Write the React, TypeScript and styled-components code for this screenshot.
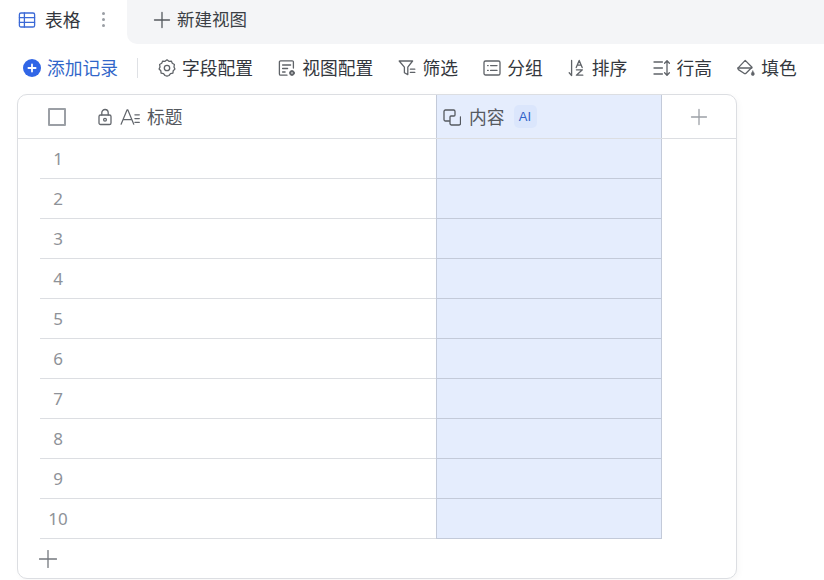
import React from "react";
import styled, { createGlobalStyle } from "styled-components";

const GlobalStyle = createGlobalStyle`
  html, body {
    margin: 0;
    padding: 0;
    background: #fff;
    width: 824px;
    height: 580px;
    overflow: hidden;
    font-family: "Noto Sans CJK SC", "Noto Sans", sans-serif;
  }
  * { box-sizing: border-box; }
  svg { flex-shrink: 0; }
`;

const GRAY = "#5f6368";

const Icon = ({ children, color = GRAY, size = 18 }: { children: React.ReactNode; color?: string; size?: number }) => (
  <svg width={size} height={size} viewBox="0 0 18 18" fill="none" stroke={color} strokeWidth="1.3" strokeLinecap="round" strokeLinejoin="round">
    {children}
  </svg>
);

const tools = [
  {
    label: "字段配置",
    icon: (
      <>
        <path d="M9 .8l1.900 1.500 2.400-.2 1 2.200 2.100 1.200-.4 2.400.9 2.200-1.700 1.700-.3 2.400-2.400.5L11 16.500 9 17.200 7 16.500l-1.500-1.900-2.400-.5-.3-2.400L1.100 10l.9-2.100-.4-2.400 2.100-1.200 1-2.200 2.400.2z" />
        <circle cx="9" cy="9" r="2.700" />
      </>
    ),
  },
  {
    label: "视图配置",
    icon: (
      <>
        <path d="M9 16.200H2.600a1.200 1.200 0 0 1-1.200-1.200V3a1.200 1.200 0 0 1 1.200-1.200h11.600A1.200 1.200 0 0 1 15.400 3v6" />
        <path d="M4.600 6h8M4.600 9.500h5M4.600 13h2.500" />
        <circle cx="14" cy="14" r="2.400" fill={GRAY} strokeWidth="1" />
        <circle cx="14" cy="14" r=".8" fill="#fff" stroke="none" />
      </>
    ),
  },
  {
    label: "筛选",
    icon: (
      <>
        <path d="M1.200 2h13.400l-4.800 6.200v7.400l-3.400-1.900V8.200z" />
        <path d="M12.400 10.200h4.400M12.400 13.400h4.400" />
      </>
    ),
  },
  {
    label: "分组",
    icon: (
      <>
        <rect x="1" y="2" width="16" height="14" rx="1.600" />
        <path d="M4.600 6.600h.6M4.600 11.400h.6M7.600 6.600h6.400M7.600 11.400h6.400" />
      </>
    ),
  },
  {
    label: "排序",
    icon: (
      <>
        <path d="M3.600 1.500v15M1.200 13.800l2.400 2.700" />
        <path d="M8.200 8.600l3-7.200 3 7.200M9.200 6.200h4" />
        <path d="M8.400 10.800h6l-6 5.400h6.400" />
      </>
    ),
  },
  {
    label: "行高",
    icon: (
      <>
        <path d="M1 3h8.400M1 9h8.400M1 15h8.400" />
        <path d="M14 1.600v14.800M11.600 4.200L14 1.600l2.400 2.600M11.600 13.800l2.400 2.600 2.400-2.600" />
      </>
    ),
  },
  {
    label: "填色",
    icon: (
      <>
        <path d="M8.200 1.400l6.800 6.800-6 6a1.400 1.400 0 0 1-2 0L1.400 10.600a1.400 1.400 0 0 1 0-2z" />
        <path d="M.8 9h14" />
        <path d="M15.800 12c.9 1.300 1.500 2.200 1.500 3a1.500 1.500 0 0 1-3 0c0-.8.6-1.700 1.500-3z" fill={GRAY} strokeWidth=".6" />
      </>
    ),
  },
];

const rows = [1, 2, 3, 4, 5, 6, 7, 8, 9, 10];

export default function App() {
  return (
    <Page>
      <GlobalStyle />
      <TabBar>
        <ActiveTab>
          <Icon color="#3b69d6">
            <rect x="1.400" y="2" width="15.200" height="14" rx="1.600" />
            <path d="M1.400 6.600h15.200M1.400 11.300h15.200M6.400 2v14" />
          </Icon>
          <TabLabel>表格</TabLabel>
          <TabMore>
            <i />
            <i />
            <i />
          </TabMore>
        </ActiveTab>
        <TabRest>
          <Icon size={18} color="#55595f">
            <path d="M9 1.500v15M1.500 9h15" />
          </Icon>
          <NewView>新建视图</NewView>
        </TabRest>
      </TabBar>

      <Toolbar>
        <AddRecord>
          <svg width="18" height="18" viewBox="0 0 18 18">
            <circle cx="9" cy="9" r="9" fill="#3166e6" />
            <path d="M9 5.400v7.200M5.400 9h7.200" stroke="#fff" strokeWidth="1.800" strokeLinecap="round" />
          </svg>
          添加记录
        </AddRecord>
        <Divider />
        <ToolList>
          {tools.map((t) => (
            <Tool key={t.label}>
              <Icon>{t.icon}</Icon>
              {t.label}
            </Tool>
          ))}
        </ToolList>
      </Toolbar>

      <Card>
        <HeaderRow>
          <CheckCell>
            <CheckBox />
          </CheckCell>
          <TitleHead>
            <Icon size={18} color="#63676d">
              <rect x="3" y="7" width="12" height="9.500" rx="1.600" />
              <path d="M5.800 7V4.700a3.200 3.200 0 0 1 6.400 0V7" />
              <circle cx="9" cy="11.700" r="1.400" />
            </Icon>
            <Icon size={20} color="#63676d">
              <path d="M1 15.500L6.400 2.500h.6l5.400 13M3.200 11.300h7" strokeWidth="1.100" />
              <path d="M13.400 7h4M13.400 10.400h4M13.400 13.800h4" strokeWidth="1.100" />
            </Icon>
            <HeadText>标题</HeadText>
          </TitleHead>
          <ContentHead>
            <Icon size={18} color="#55595f">
              <path d="M6 13H2.400A1.400 1.400 0 0 1 1 11.600V3.400A1.400 1.400 0 0 1 2.400 2h8.200A1.400 1.400 0 0 1 12 3.400V7a1 1 0 0 1-1 1H8a1 1 0 0 0-1 1v6.600A1.400 1.400 0 0 0 8.400 17h7.700a1.400 1.400 0 0 0 1.400-1.400V9" />
            </Icon>
            <HeadText>内容</HeadText>
            <AiBadge>AI</AiBadge>
          </ContentHead>
          <AddColumn>
            <Icon size={18} color="#9ca0a6">
              <path d="M9 1.500v15M1.500 9h15" />
            </Icon>
          </AddColumn>
        </HeaderRow>

        {rows.map((n) => (
          <Row key={n}>
            <RowMain>
              <RowNumber>{n}</RowNumber>
            </RowMain>
            <ContentCell />
          </Row>
        ))}

        <Footer>
          <Icon size={18} color="#74787e">
            <path d="M9 .500v17M.500 9h17" />
          </Icon>
        </Footer>
      </Card>
    </Page>
  );
}

const Page = styled.div`
  width: 824px;
  height: 580px;
  display: flex;
  flex-direction: column;
  background: #fff;
  overflow: hidden;
`;

const TabBar = styled.div`
  display: flex;
  height: 44px;
  flex-shrink: 0;
`;

const ActiveTab = styled.div`
  width: 127px;
  display: flex;
  align-items: center;
  padding: 0 0 7px 18px;
  background: #fff;
  svg {
    margin-top: 2px;
  }
`;

const TabLabel = styled.span`
  margin-left: 9px;
  font-size: 17.75px;
  color: #33373d;
`;

const TabMore = styled.span`
  margin: 2px 0 0 21px;
  display: flex;
  flex-direction: column;
  gap: 3px;
  i {
    display: block;
    width: 3px;
    height: 3px;
    border-radius: 50%;
    background: #9a9ea4;
  }
`;

const TabRest = styled.div`
  flex: 1;
  display: flex;
  align-items: center;
  gap: 6px;
  padding: 0 0 7px 26px;
  background: #f4f5f7;
  border-bottom-left-radius: 10px;
  svg {
    margin-top: 2px;
  }
`;

const NewView = styled.span`
  font-size: 17.5px;
  color: #3b3f45;
`;

const Toolbar = styled.div`
  height: 50px;
  flex-shrink: 0;
  display: flex;
  align-items: center;
  padding: 0 0 4px 23px;
  svg {
    margin-top: 2px;
  }
`;

const AddRecord = styled.div`
  display: flex;
  align-items: center;
  gap: 6px;
  font-size: 17.75px;
  color: #3166c9;
  white-space: nowrap;
`;

const Divider = styled.div`
  width: 1px;
  height: 20px;
  margin: 2px 20px 0 19px;
  background: #dfe1e5;
`;

const ToolList = styled.div`
  display: flex;
  gap: 25.2px;
`;

const Tool = styled.div`
  display: flex;
  align-items: center;
  gap: 6px;
  font-size: 17.75px;
  color: #33373d;
  white-space: nowrap;
`;

const Card = styled.div`
  width: 720px;
  height: 485px;
  margin-left: 17px;
  display: flex;
  flex-direction: column;
  background: #fff;
  border: 1px solid #dcdee2;
  border-radius: 10px;
  box-shadow: 2px 2px 6px rgba(0, 0, 0, 0.03);
  overflow: hidden;
`;

const HeaderRow = styled.div`
  display: grid;
  grid-template-columns: 78px 340px 226px 1fr;
  height: 44px;
  flex-shrink: 0;
  border-bottom: 1px solid #dcdee2;
`;

const CheckCell = styled.div`
  display: flex;
  align-items: center;
  justify-content: center;
`;

const CheckBox = styled.span`
  display: block;
  width: 18px;
  height: 18px;
  border: 2px solid #9b9fa5;
  border-radius: 1px;
`;

const TitleHead = styled.div`
  display: flex;
  align-items: center;
  gap: 6px;
  padding-bottom: 2px;
  svg {
    margin-top: 2px;
  }
`;

const HeadText = styled.span`
  margin-left: 1px;
  font-size: 17.75px;
  color: #55595f;
`;

const ContentHead = styled.div`
  display: flex;
  align-items: center;
  gap: 7px;
  padding: 0 0 2px 6px;
  background: #e5edfd;
  border-left: 1px solid #c3cad9;
  border-right: 1px solid #c3cad9;
  svg {
    margin-top: 2px;
  }
`;

const AiBadge = styled.span`
  display: flex;
  align-items: center;
  justify-content: center;
  width: 23px;
  height: 23px;
  margin: 2px 0 0 2px;
  border-radius: 5px;
  background: #dbe6fc;
  color: #2f63c9;
  font-family: "Liberation Sans", sans-serif;
  font-size: 13px;
`;

const AddColumn = styled.div`
  display: flex;
  align-items: center;
  justify-content: center;
`;

const Row = styled.div`
  display: grid;
  grid-template-columns: 396px 226px;
  height: 40px;
  flex-shrink: 0;
  margin-left: 22px;
`;

const RowMain = styled.div`
  display: flex;
  align-items: center;
  border-bottom: 1px solid #dcdee2;
`;

const RowNumber = styled.span`
  width: 36px;
  text-align: center;
  font-family: "Noto Sans", sans-serif;
  font-size: 17px;
  color: #8e9298;
`;

const ContentCell = styled.div`
  background: #e5edfd;
  border-left: 1px solid #c3cad9;
  border-right: 1px solid #c3cad9;
  border-bottom: 1px solid #c3cad9;
`;

const Footer = styled.div`
  flex: 1;
  display: flex;
  align-items: center;
  padding-left: 21px;
`;
